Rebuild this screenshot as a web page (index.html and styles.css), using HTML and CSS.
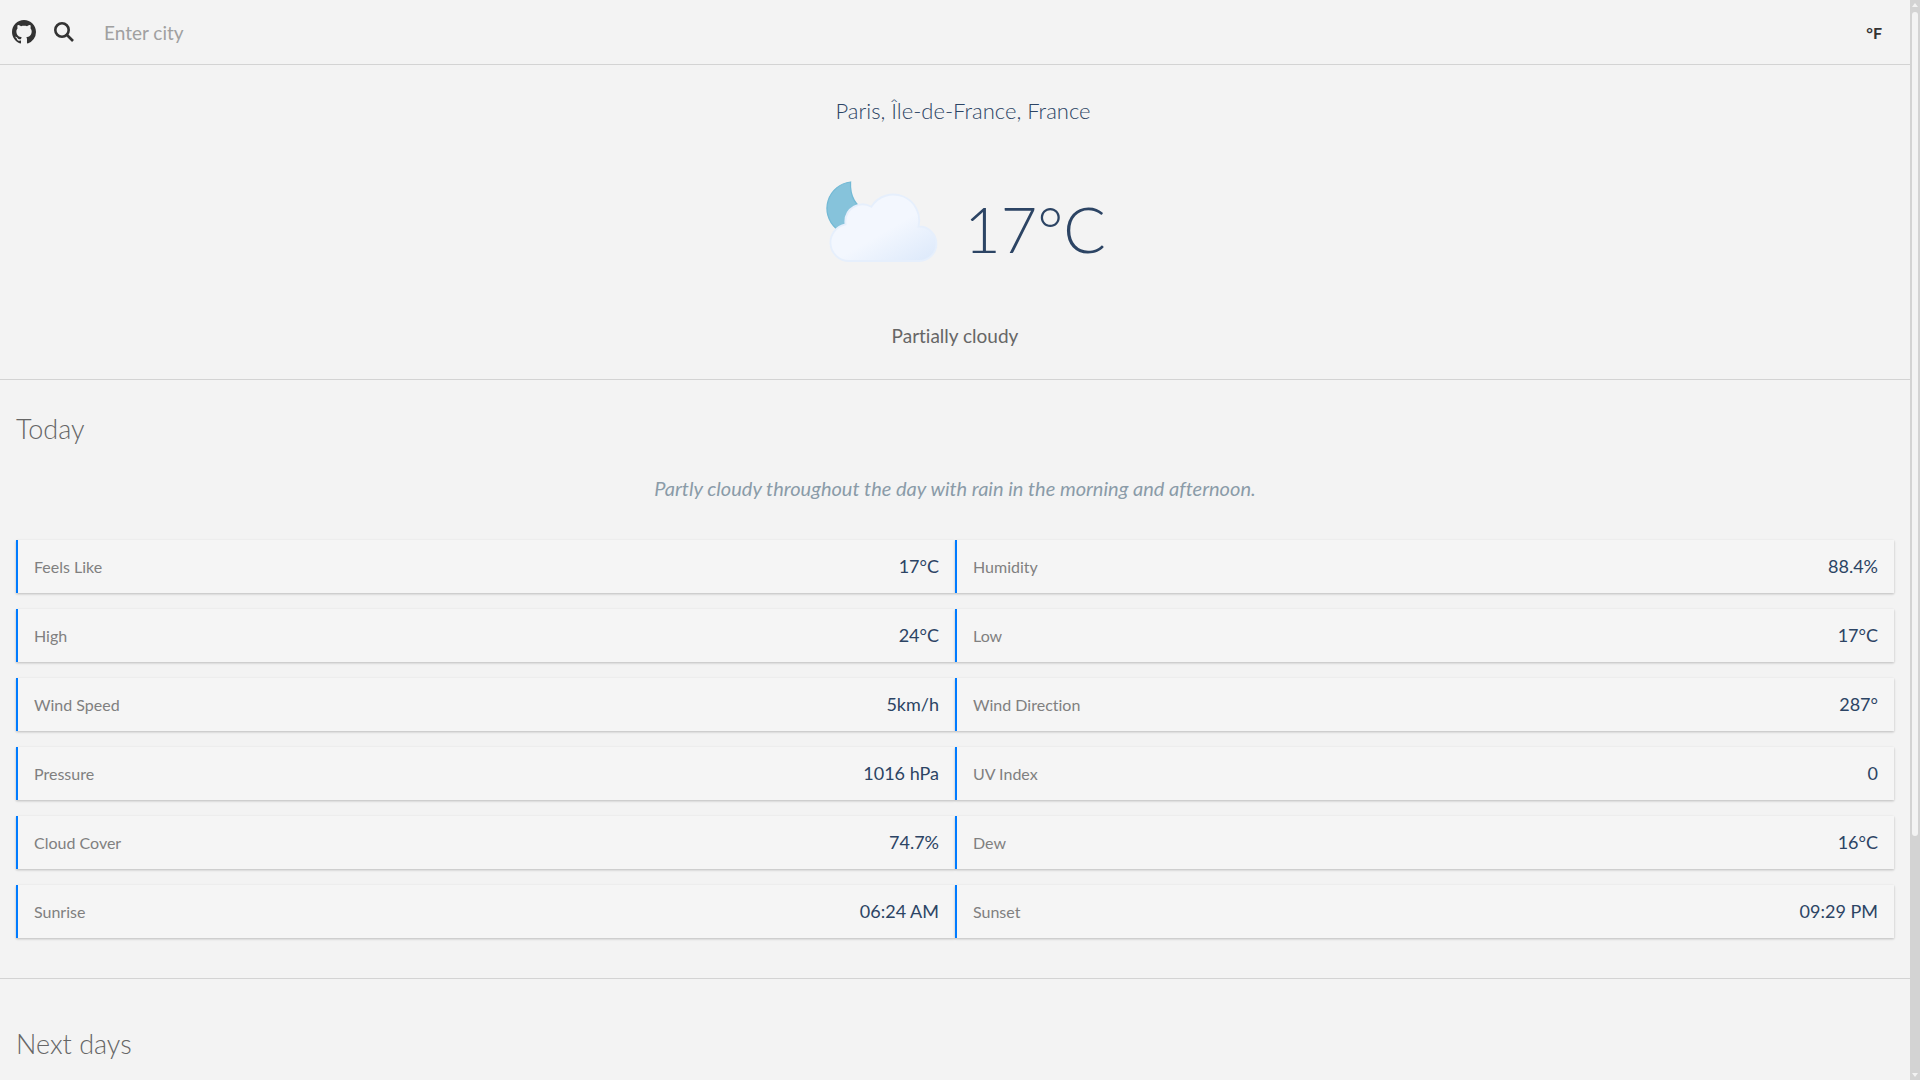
FILE: index.html
```html
<!DOCTYPE html>
<html lang="en">
<head>
<meta charset="utf-8">
<meta name="viewport" content="width=device-width, initial-scale=1">
<title>Weather</title>
<link rel="stylesheet" href="styles.css">
</head>
<body>
<div class="app">
  <div class="page">
    <header class="topbar">
      <a class="icon-link" href="#" aria-label="GitHub repository">
        <svg class="icon-github" viewBox="0 0 16 16" aria-hidden="true"><path d="M8 0C3.58 0 0 3.58 0 8c0 3.54 2.29 6.53 5.47 7.59.4.07.55-.17.55-.38 0-.19-.01-.82-.01-1.49-2.01.37-2.53-.49-2.69-.94-.09-.23-.48-.94-.82-1.13-.28-.15-.68-.52-.01-.53.63-.01 1.08.58 1.23.82.72 1.21 1.87.87 2.33.66.07-.52.28-.87.51-1.07-1.78-.2-3.64-.89-3.64-3.95 0-.87.31-1.59.82-2.15-.08-.2-.36-1.02.08-2.12 0 0 .67-.21 2.2.82.64-.18 1.32-.27 2-.27s1.36.09 2 .27c1.53-1.04 2.2-.82 2.2-.82.44 1.1.16 1.92.08 2.12.51.56.82 1.27.82 2.15 0 3.07-1.87 3.75-3.65 3.95.29.25.54.73.54 1.48 0 1.07-.01 1.93-.01 2.2 0 .21.15.46.55.38A8.01 8.01 0 0 0 16 8c0-4.42-3.58-8-8-8z"/></svg>
      </a>
      <form class="search">
        <button class="search-button" type="button" aria-label="Search">
          <svg class="icon-search" viewBox="0 0 20 20" aria-hidden="true"><circle cx="8" cy="8" r="6.7"/><path d="M13 13l6 6"/></svg>
        </button>
        <input class="search-input" type="text" placeholder="Enter city" aria-label="City">
      </form>
      <button class="unit-button" type="button">°F</button>
    </header>

    <main>
      <section class="current">
        <h1 class="location">Paris, Île-de-France, France</h1>
        <div class="reading">
          <svg class="weather-icon" viewBox="0 0 512 512" role="img" aria-label="Partly cloudy night">
            <defs>
              <linearGradient id="cloud" x1="99.5" y1="30.7" x2="232.6" y2="261.4" gradientUnits="userSpaceOnUse">
                <stop offset="0" stop-color="#f3f7fe"/>
                <stop offset=".45" stop-color="#f3f7fe"/>
                <stop offset="1" stop-color="#deeafb"/>
              </linearGradient>
            </defs>
            <path fill="#86c3db" stroke="#72b9d5" stroke-width="4" d="M149 112A85 85 0 0 0 102 260L190 280L204 209Q145 180 149 112Z"/>
            <path transform="translate(82 149) scale(.985)" fill="url(#cloud)" stroke="#e6effc" stroke-width="6" d="m291 107-2.5.1A83.9 83.9 0 0 0 135.6 43 56 56 0 0 0 51 91a56.6 56.6 0 0 0 .8 9A60 60 0 0 0 63 219l4-.2v.2h224a56 56 0 0 0 0-112Z"/>
          </svg>
          <span class="temperature">17°C</span>
        </div>
        <p class="condition">Partially cloudy</p>
      </section>

      <section class="today">
        <h2 class="section-title">Today</h2>
        <p class="summary">Partly cloudy throughout the day with rain in the morning and afternoon.</p>
        <dl class="details">
          <div class="detail"><dt>Feels Like</dt><dd>17°C</dd></div>
          <div class="detail"><dt>Humidity</dt><dd>88.4%</dd></div>
          <div class="detail"><dt>High</dt><dd>24°C</dd></div>
          <div class="detail"><dt>Low</dt><dd>17°C</dd></div>
          <div class="detail"><dt>Wind Speed</dt><dd>5km/h</dd></div>
          <div class="detail"><dt>Wind Direction</dt><dd>287°</dd></div>
          <div class="detail"><dt>Pressure</dt><dd>1016 hPa</dd></div>
          <div class="detail"><dt>UV Index</dt><dd>0</dd></div>
          <div class="detail"><dt>Cloud Cover</dt><dd>74.7%</dd></div>
          <div class="detail"><dt>Dew</dt><dd>16°C</dd></div>
          <div class="detail"><dt>Sunrise</dt><dd>06:24 AM</dd></div>
          <div class="detail"><dt>Sunset</dt><dd>09:29 PM</dd></div>
        </dl>
      </section>

      <section class="next">
        <h2 class="section-title">Next days</h2>
      </section>
    </main>
  </div>
  <div class="scrollbar" aria-hidden="true">
    <svg class="arrow" viewBox="0 0 10 12"><path d="M5 3l3 4H2z"/></svg>
    <div class="track"><div class="thumb"></div></div>
    <svg class="arrow" viewBox="0 0 10 12"><path d="M5 9l3-4H2z"/></svg>
  </div>
</div>
</body>
</html>
```
FILE: styles.css
```css
* {
  box-sizing: border-box;
}

body {
  margin: 0;
  background: #f3f3f3;
  font-family: Lato, sans-serif;
  font-size: 16px;
  font-variant-ligatures: no-common-ligatures;
  color: #666;
}

h1, h2, p, dl, dd {
  margin: 0;
}

button, input {
  border: 0;
  padding: 0;
  background: none;
  font-family: inherit;
}

.app {
  display: flex;
  height: 100vh;
  overflow: hidden;
}

.page {
  flex: 1;
  overflow: hidden;
}

.topbar {
  display: flex;
  align-items: center;
  height: 65px;
  padding: 0 28px 0 12px;
  border-bottom: 1px solid #d3d3d3;
}

.icon-link,
.search-button {
  display: flex;
}

.icon-github {
  width: 24px;
  height: 24px;
  fill: #333;
}

.search {
  display: flex;
  flex: 1;
  align-items: center;
  gap: 30px;
  margin-left: 18px;
}

.icon-search {
  width: 20px;
  height: 20px;
  fill: none;
  stroke: #333;
  stroke-width: 2.6;
}

.search-input {
  flex: 1;
  height: 48px;
  outline: 0;
  font-size: 19px;
  color: #333;
}

.search-input::placeholder {
  color: #a0a0a0;
}

.unit-button {
  font-size: 16px;
  font-weight: 700;
  color: #333;
}

.current {
  display: flex;
  flex-direction: column;
  align-items: center;
  padding: 32px 16px;
  border-bottom: 1px solid #d3d3d3;
}

.location {
  padding-left: 16px;
  font-size: 22px;
  line-height: 28px;
  font-weight: 300;
  color: #2c4464;
}

.reading {
  display: flex;
  align-items: center;
  height: 160px;
  margin: 22px 0 17px;
}

.weather-icon {
  width: 160px;
  height: 160px;
}

.temperature {
  padding-top: 2px;
  font-size: 63px;
  font-weight: 300;
  color: #2c4464;
}

.condition {
  margin-bottom: -1px;
  font-size: 19px;
  line-height: 24px;
}

.today {
  padding: 33px 16px 40px;
  border-bottom: 1px solid #d3d3d3;
}

.section-title {
  font-size: 27px;
  line-height: 32px;
  font-weight: 300;
}

.summary {
  margin: 31px 0 40px;
  font-size: 20px;
  line-height: 24px;
  font-style: italic;
  text-align: center;
  color: #8a9ba8;
}

.details {
  display: grid;
  grid-template-columns: 1fr 1fr;
  row-gap: 16px;
}

.detail {
  display: flex;
  align-items: center;
  justify-content: space-between;
  height: 53px;
  padding: 0 16px;
  border-left: 2px solid #007bff;
  background: #f5f5f5;
  box-shadow: 0 1px 3px rgba(0, 0, 0, 0.1), 0 1px 2px rgba(0, 0, 0, 0.14);
}

.detail dt {
  font-size: 16px;
  color: #808080;
}

.detail dd {
  padding-bottom: 2px;
  font-size: 18px;
  color: #2c4464;
}

.next {
  padding: 49px 16px;
}

.scrollbar {
  display: flex;
  flex-direction: column;
  width: 10px;
  background: #d3d3d3;
}

.arrow {
  width: 10px;
  height: 12px;
  fill: #f3f3f3;
}

.track {
  flex: 1;
  padding: 0 2px;
}

.thumb {
  height: 78%;
  border-radius: 3px;
  background: #f3f3f3;
}
```
